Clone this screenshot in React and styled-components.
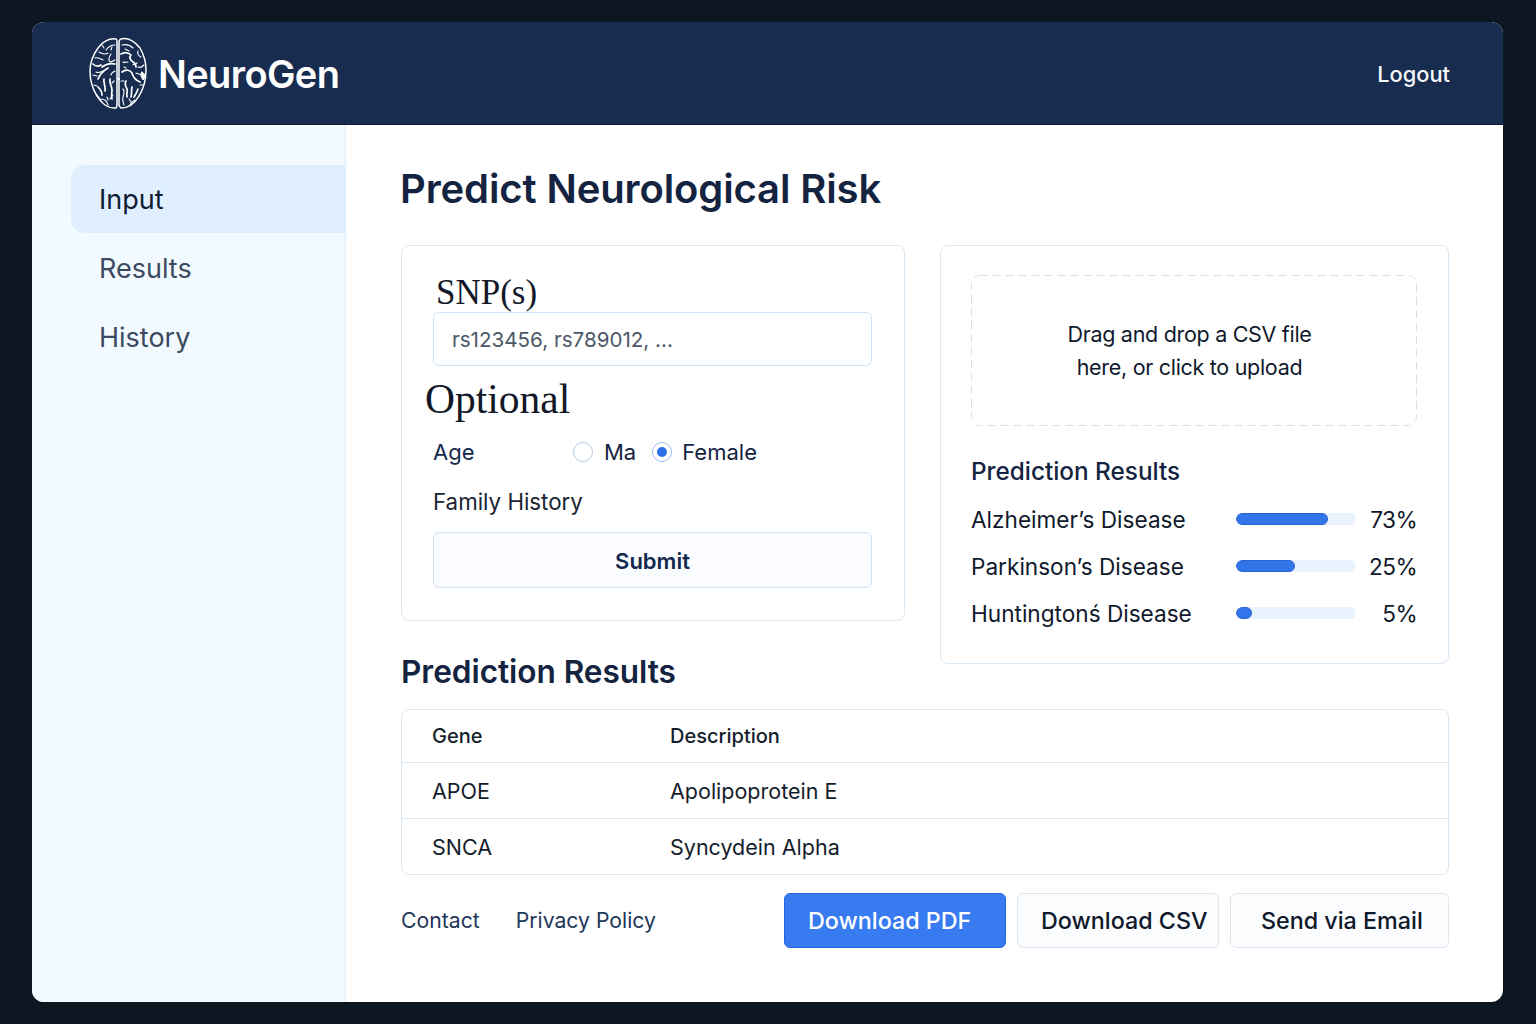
import React from "react";
import styled, { createGlobalStyle } from "styled-components";

const Global = createGlobalStyle`
  html, body { margin: 0; padding: 0; background: #0c1722; }
  * { box-sizing: border-box; }
  body { font-family: Inter, "Liberation Sans", sans-serif; }
`;
const Page = styled.div`
  width: 1536px; height: 1024px; padding: 22px 33px 22px 32px; background: #0c1722;
`;
const Frame = styled.div`
  height: 980px; border-radius: 12px; overflow: hidden; background: #fff;
  display: flex; flex-direction: column;
`;
const Header = styled.header`
  height: 103px; flex: none; background: #182c50; border-bottom: 1px solid #0e1b33;
  display: flex; align-items: center; justify-content: space-between;
  padding: 1px 53px 0 56px; color: #fff;
`;
const Brand = styled.div`display: flex; align-items: center; gap: 10px;`;
const BrandName = styled.div`font-size: 38px; font-weight: 600; letter-spacing: -0.6px;`;
const Logout = styled.a`font-size: 21.8px; font-weight: 500; color: #f6f8fb;`;
const Body = styled.div`flex: 1; display: flex; min-height: 0;`;
const Side = styled.nav`
  width: 314px; flex: none; background: #f2faff; border-right: 1px solid #e3edf5;
  padding: 40px 0 0 39px; display: flex; flex-direction: column; gap: 1px;
`;
const NavItem = styled.a`
  height: 68px; display: flex; align-items: center; padding-left: 28px;
  font-size: 27px; color: ${p => (p.$active ? "#0f1c33" : "#3a4a60")};
  background: ${p => (p.$active ? "#dfeffd" : "transparent")};
  border-radius: 14px 0 0 14px;
`;
const Main = styled.main`flex: 1; padding: 40px 54px 0 55px; display: flex; flex-direction: column;`;
const Title = styled.h1`
  margin: 0 0 31px -1px; height: 49px; line-height: 48px; font-size: 40px; font-weight: 600; color: #14233f; letter-spacing: -0.12px;
`;
const Columns = styled.div`display: flex; justify-content: space-between; align-items: flex-start;`;
const LeftCol = styled.div`width: 504px;`;
const Card = styled.section`
  background: #fff; border: 1px solid #d9e8f5; border-radius: 8px;
`;
const FormCard = styled(Card)`height: 376px; padding: 28px 32px 0 31px; display: flex; flex-direction: column;`;
const ResultCard = styled(Card)`width: 509px; height: 419px; padding: 29px 30px 0 30px;`;
const SnpLabel = styled.label`
  font-family: "Liberation Serif", serif; font-size: 35px; line-height: 37px; color: #111827; margin-left: 3px;
`;
const Input = styled.div`
  height: 54px; margin-top: 1px; border: 1px solid #cfe2f3; border-radius: 6px; padding: 0 18px;
  display: flex; align-items: center; font-size: 20.6px; color: #4b5768;
`;
const OptionalLabel = styled.div`
  font-family: "Liberation Serif", serif; font-size: 41.5px; line-height: 47px; color: #111827; margin: 10px 0 0 -8px;
`;
const OptionRow = styled.div`display: flex; align-items: center; height: 32px; margin-top: 13px; font-size: 22px; color: #14233f;`;
const AgeLabel = styled.span`width: 140px; color: #14294f;`;
const RadioGroup = styled.label`display: flex; align-items: center; gap: ${p => p.$gap}px; margin-right: 16px;`;
const Radio = styled.span`
  width: 20px; height: 20px; border-radius: 50%; border: 1px solid ${p => (p.$on ? "#9bbcf0" : "#b6cde6")};
  display: flex; align-items: center; justify-content: center;
  &::after { content: ""; width: 10px; height: 10px; border-radius: 50%; background: ${p => (p.$on ? "#2f6fe8" : "transparent")}; }
`;
const FamilyRow = styled.div`height: 32px; line-height: 32px; margin-top: 18px; font-size: 22.3px; color: #1a2433;`;
const Submit = styled.button`
  height: 56px; margin-top: 14px; width: 100%; padding: 2px 0 0; background: #fafcff; border: 1px solid #cfe2f3; border-radius: 6px;
  font: 600 22px Inter, sans-serif; color: #14294f;
`;
const SectionTitle = styled.h2`
  margin: 33px 0 0; font-size: 31.6px; line-height: 36px; font-weight: 600; color: #14233f; letter-spacing: -0.05px;
`;
const dash = `%3Csvg xmlns='http://www.w3.org/2000/svg' width='446' height='151'%3E%3Crect x='.5' y='.5' width='445' height='150' rx='8' fill='none' stroke='%23d3e0ec' stroke-dasharray='8 5'/%3E%3C/svg%3E`;
const Drop = styled.div`
  height: 151px; width: 446px; border-radius: 8px; display: flex; align-items: center; justify-content: center;
  background-image: url("data:image/svg+xml,${dash}");
  padding-right: 9px; text-align: center; font-size: 21.5px; letter-spacing: -0.3px; line-height: 33px; color: #10192b;
`;
const SmallTitle = styled.h3`margin: 28px 0 0; font-size: 24.3px; line-height: 34px; font-weight: 500; color: #14233f;`;
const Rows = styled.div`margin-top: 15px; display: flex; flex-direction: column; gap: 15px;`;
const Row = styled.div`display: flex; align-items: center; height: 32px; font-size: 22.6px; color: #10192b; width: 446px;`;
const RowName = styled.span`width: 265px; flex: none; white-space: nowrap;`;
const Track = styled.div`width: 120px; height: 12px; flex: none; border-radius: 6px; background: #e8f3fd; overflow: hidden;`;
const Fill = styled.div`height: 100%; background: #3274ea; border: 1px solid #2a62d0; border-radius: 6px;`;
const Pct = styled.span`flex: 1; text-align: right; letter-spacing: -0.6px;`;
const Table = styled.div`
  margin-top: 19px; height: 166px; border: 1px solid #d9e8f5; border-radius: 8px; display: flex; flex-direction: column;
`;
const TableRow = styled.div`
  flex: ${p => (p.$head ? "0 0 52px" : "1")}; display: grid; grid-template-columns: 238px 1fr; align-items: center; padding-left: 30px;
  font-size: ${p => (p.$head ? "20px" : "21.5px")}; font-weight: ${p => (p.$head ? 500 : 400)}; color: #141d2c;
  & + & { border-top: 1px solid #d9e8f5; }
`;
const Footer = styled.div`display: flex; align-items: center; margin-top: 18px;`;
const Links = styled.div`display: flex; gap: 36px; flex: 1; font-size: 21.2px; color: #22365a; padding-bottom: 2px;`;
const Actions = styled.div`display: flex; gap: 11px;`;
const ActionButton = styled.button`
  height: 55px; width: ${p => p.$w}px; border-radius: 6px; font: 500 23.3px Inter, sans-serif; text-align: left;
  padding: 0 0 0 ${p => p.$pad}px;
  background: ${p => (p.$primary ? "#387bf0" : "#fbfcfe")};
  border: 1px solid ${p => (p.$primary ? "#2464e0" : "#dbe7f3")};
  color: ${p => (p.$primary ? "#fff" : "#10192b")};
`;

const Brain = () => (
  <svg width="60" height="74" viewBox="0 0 60 74" fill="none" stroke="#fff" strokeLinecap="round" strokeLinejoin="round">
    <g strokeWidth="1.5">
      <path d="M28 2C21 1 14 5 10 11 5 18 2 26 2 34c0 9 2 17 7 25 4 7 11 13 19 12 1-1 1-2 1-3V5c0-1 0-3-1-3Z" />
      <path d="M33 2c8-2 14 3 19 9 4 7 6 14 6 22 0 9-2 18-7 26-4 7-10 12-18 12-1-1-2-2-2-3V5c0-1 1-3 2-3Z" />
    </g>
    <g strokeWidth="1.7">
      <path d="M14 30c4-3 9-4 13-3M10 42c2-5 5-8 10-11M5 27c3 3 5 3 8 1M22 42c-1 4 2 7 2 11 0 3-1 6 0 9M16 42c-1 4 2 7 1 12M10 50c2 2 4 4 4 8" />
      <path d="M33 17c4-2 8-1 10 1-2 2-1 5 2 7 2 1 3 3 3 5M34 35c4-3 8-2 10 1 1 4 3 7 8 9M38 44c-2 3 0 6 1 8 1 3-1 5 0 8M44 50c-1 4 0 7-1 10M50 52c-1 3-2 5-4 8" />
    </g>
    <g strokeWidth="1.1">
      <path d="M27 8c-4 0-7 2-9 5M11 15c3 2 6 3 9 1M7 21c3-1 6 1 8 2M23 17c-2 3-3 6-1 8 2 0 3-1 5-2M24 10l-1 3M14 8l2 3M8 35c2 1 5 0 7-1M5 38l4 1" />
      <path d="M27 34c-2 1-4 2-4 4M6 48l3 1M13 62c3 0 6 2 7 6M9 58l5 7M25 58l-3 4M26 44l-2 2M19 60l1 3" />
      <path d="M34 8c4-1 8 0 11 3M37 12l4 2M50 14c-1 3 1 5 3 6M40 25c-2 0-4 1-5 0M50 30c2 1 4 0 6-2M45 28l4-2M48 36c2 1 5 2 8 1" />
      <path d="M35 52c2 2 1 5 0 8s0 5 1 8M47 63c-2 1-4 3-5 5M52 48l3 0M41 62l2 3M33 44l3 0M36 30l2 1" />
    </g>
    <path d="M54 35c2 1 3 3 3 5l-2 3-2-4Z" fill="#fff" strokeWidth="1" />
    <circle cx="30.5" cy="42" r="1.3" fill="#fff" stroke="none" />
  </svg>
);

const results = [
  { name: "Alzheimer’s Disease", width: 77, label: "73%" },
  { name: "Parkinson’s Disease", width: 49, label: "25%" },
  { name: "Huntingtonś Disease", width: 13, label: "5%" },
];

export default function App() {
  return (
    <Page>
      <Global />
      <Frame>
        <Header>
          <Brand>
            <Brain />
            <BrandName>NeuroGen</BrandName>
          </Brand>
          <Logout>Logout</Logout>
        </Header>
        <Body>
          <Side>
            <NavItem $active>Input</NavItem>
            <NavItem>Results</NavItem>
            <NavItem>History</NavItem>
          </Side>
          <Main>
            <Title>Predict Neurological Risk</Title>
            <Columns>
              <LeftCol>
                <FormCard>
                  <SnpLabel>SNP(s)</SnpLabel>
                  <Input>rs123456, rs789012, ...</Input>
                  <OptionalLabel>Optional</OptionalLabel>
                  <OptionRow>
                    <AgeLabel>Age</AgeLabel>
                    <RadioGroup $gap={11}><Radio />Ma</RadioGroup>
                    <RadioGroup $gap={10}><Radio $on />Female</RadioGroup>
                  </OptionRow>
                  <FamilyRow>Family History</FamilyRow>
                  <Submit>Submit</Submit>
                </FormCard>
                <SectionTitle>Prediction Results</SectionTitle>
              </LeftCol>
              <ResultCard>
                <Drop>
                  <div>Drag and drop a CSV file<br />here, or click to upload</div>
                </Drop>
                <SmallTitle>Prediction Results</SmallTitle>
                <Rows>
                  {results.map(r => (
                    <Row key={r.name}>
                      <RowName>{r.name}</RowName>
                      <Track><Fill style={{ width: `${r.width}%` }} /></Track>
                      <Pct>{r.label}</Pct>
                    </Row>
                  ))}
                </Rows>
              </ResultCard>
            </Columns>
            <Table>
              <TableRow $head><span>Gene</span><span>Description</span></TableRow>
              <TableRow><span>APOE</span><span>Apolipoprotein E</span></TableRow>
              <TableRow><span>SNCA</span><span>Syncydein Alpha</span></TableRow>
            </Table>
            <Footer>
              <Links><a>Contact</a><a>Privacy Policy</a></Links>
              <Actions>
                <ActionButton $primary $w={222} $pad={23}>Download PDF</ActionButton>
                <ActionButton $w={202} $pad={23}>Download CSV</ActionButton>
                <ActionButton $w={219} $pad={30}>Send via Email</ActionButton>
              </Actions>
            </Footer>
          </Main>
        </Body>
      </Frame>
    </Page>
  );
}
